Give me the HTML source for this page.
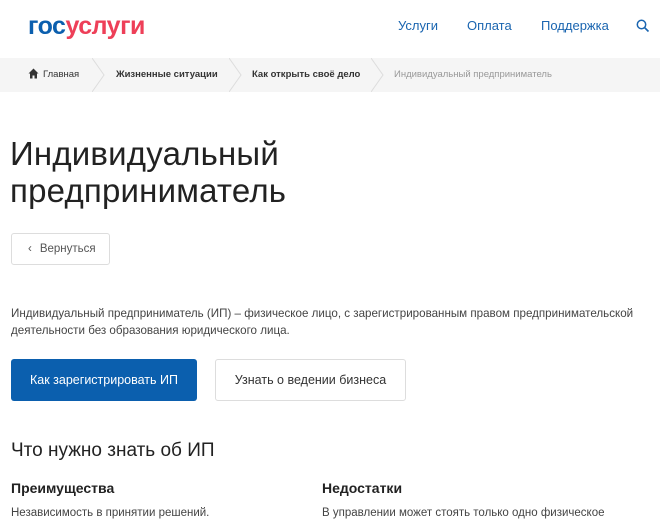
<!DOCTYPE html>
<html><head><meta charset="utf-8"><style>
*{margin:0;padding:0;box-sizing:border-box}
body{width:660px;height:525px;overflow:hidden;background:#fff;font-family:"Liberation Sans",sans-serif;color:#222;position:relative}
.a{position:absolute;white-space:nowrap}
.logo{left:28px;top:12px;font-size:25px;font-weight:bold;letter-spacing:-0.5px}
.nav{top:18px;font-size:13px;color:#1a65b0}
.bc{left:0;top:58px;width:660px;height:34px;background:#f5f5f5}
.bi{top:69px;font-size:9.5px;font-weight:bold;color:#333}
.sep{top:58px;width:14px;height:34px}
h1{position:absolute;left:10px;top:135px;font-size:33px;font-weight:normal;line-height:37px;color:#222;letter-spacing:0.2px}
.btnb{left:11px;top:233px;width:99px;height:32px;border:1px solid #ddd;border-radius:3px;font-size:11.5px;color:#555;padding:9px 0 0 16px}
.p{left:11px;top:305px;font-size:11.6px;line-height:17px;color:#444}
.b1{left:11px;top:359px;width:186px;height:42px;background:#0b5fae;border-radius:3px;color:#fff;font-size:12.5px;text-align:center;line-height:42px}
.b2{left:215px;top:359px;width:191px;height:42px;border:1px solid #ddd;border-radius:3px;color:#333;font-size:12.5px;text-align:center;line-height:40px}
</style></head><body>
<div class="a logo"><span style="color:#0b5fae">гос</span><span style="color:#ee3f58">услуги</span></div>
<div class="a nav" style="left:398px">Услуги</div>
<div class="a nav" style="left:467px">Оплата</div>
<div class="a nav" style="left:541px">Поддержка</div>
<svg class="a" style="left:636px;top:19px" width="14" height="14" viewBox="0 0 14 14"><circle cx="5.5" cy="5.5" r="4.2" fill="none" stroke="#1a65b0" stroke-width="1.5"/><path d="M8.5 8.5L12.5 12.5" stroke="#1a65b0" stroke-width="1.6"/></svg>
<div class="a bc"></div>
<svg class="a" style="left:28px;top:68px" width="11" height="11" viewBox="0 0 11 11"><path d="M5.5 0.5L0.5 5.5H2V10.5H4.5V7.5H6.5V10.5H9V5.5H10.5Z" fill="#333"/></svg>
<div class="a bi" style="left:43px;font-weight:normal">Главная</div>
<div class="a bi" style="left:116px">Жизненные ситуации</div>
<div class="a bi" style="left:252px">Как открыть своё дело</div>
<div class="a bi" style="left:394px;font-weight:normal;color:#999">Индивидуальный предприниматель</div>
<svg class="a sep" style="left:92px" viewBox="0 0 14 34"><path d="M0 0L12 17L0 34" fill="none" stroke="#ddd"/></svg>
<svg class="a sep" style="left:229px" viewBox="0 0 14 34"><path d="M0 0L12 17L0 34" fill="none" stroke="#ddd"/></svg>
<svg class="a sep" style="left:371px" viewBox="0 0 14 34"><path d="M0 0L12 17L0 34" fill="none" stroke="#ddd"/></svg>
<h1>Индивидуальный<br>предприниматель</h1>
<div class="a btnb"><span style="margin-right:8px">‹</span>Вернуться</div>
<div class="a p">Индивидуальный предприниматель (ИП) – физическое лицо, с зарегистрированным правом предпринимательской<br>деятельности без образования юридического лица.</div>
<div class="a b1">Как зарегистрировать ИП</div>
<div class="a b2">Узнать о ведении бизнеса</div>
<div class="a" style="left:11px;top:440px;font-size:19px;color:#222">Что нужно знать об ИП</div>
<div class="a" style="left:11px;top:480px;font-size:14px;font-weight:bold">Преимущества</div>
<div class="a" style="left:322px;top:480px;font-size:14px;font-weight:bold">Недостатки</div>
<div class="a" style="left:11px;top:507px;font-size:11.5px;color:#444">Независимость в принятии решений.</div>
<div class="a" style="left:322px;top:507px;font-size:11.5px;color:#444">В управлении может стоять только одно физическое</div>
</body></html>
